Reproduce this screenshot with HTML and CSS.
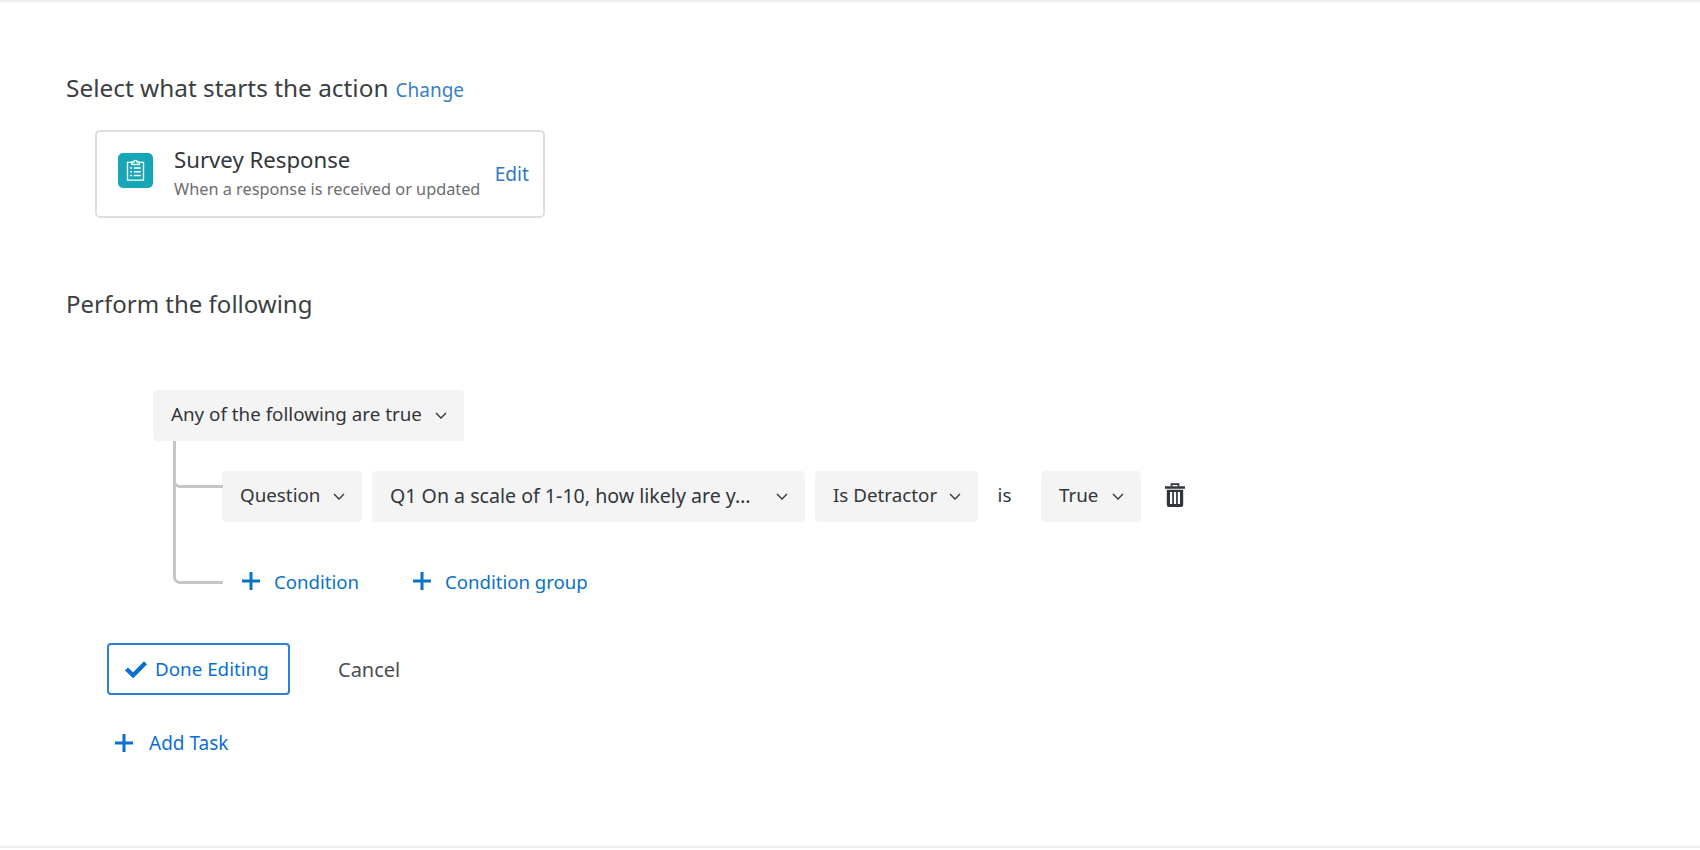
FILE: index.html
```html
<!DOCTYPE html>
<html lang="en">
<head>
<meta charset="utf-8">
<title>Survey Response action</title>
<link rel="stylesheet" href="styles.css">
</head>
<body>
<div class="page">
  <div class="heading-row first">
    <h2 class="heading">Select what starts the action</h2>
    <a class="change">Change</a>
  </div>
  <div class="card">
    <span class="card-icon">
      <svg viewBox="0 0 20 20" width="25" height="25" fill="none" stroke="#fff" stroke-width="1.1">
        <path d="M6.5 3.5H3.6v14.2h12.8V3.5h-2.9"/>
        <path d="M7 5.2V3.2h1.7a1.3 1.3 0 0 1 2.6 0H13v2z"/>
        <path d="M5.8 8h1.4M5.8 11h1.4M5.8 14h1.4M8.6 8h5.6M8.6 11h5.6M8.6 14h5.6"/>
      </svg>
    </span>
    <div class="card-text">
      <div class="card-title">Survey Response</div>
      <div class="card-sub">When a response is received or updated</div>
    </div>
    <a class="edit">Edit</a>
  </div>
  <h2 class="heading second">Perform the following</h2>

  <div class="logic">
    <div class="select any">Any of the following are true<svg class="chev" viewBox="0 0 12 7"><path d="M1 1l5 5 5-5"/></svg></div>
    <div class="tree">
      <div class="branch mid">
        <div class="select question">Question<svg class="chev" viewBox="0 0 12 7"><path d="M1 1l5 5 5-5"/></svg></div>
        <div class="select q1"><span>Q1 On a scale of 1-10, how likely are y…</span><svg class="chev" viewBox="0 0 12 7"><path d="M1 1l5 5 5-5"/></svg></div>
        <div class="select detractor">Is Detractor<svg class="chev" viewBox="0 0 12 7"><path d="M1 1l5 5 5-5"/></svg></div>
        <span class="is">is</span>
        <div class="select truth">True<svg class="chev" viewBox="0 0 12 7"><path d="M1 1l5 5 5-5"/></svg></div>
        <svg class="trash" viewBox="0 0 20 24" width="20" height="24">
          <path class="trash-lid" d="M6.5 3.5V1.2h7v2.3"/>
          <path class="trash-fill" d="M0 3.2h20v2.5H0zM1.8 6.8h16.4V22a2 2 0 0 1-2 2H3.8a2 2 0 0 1-2-2zM5 9v12h2.2V9zM8.9 9v12h2.2V9zM12.8 9v12H15V9z" fill-rule="evenodd"/>
        </svg>
      </div>
      <div class="branch last">
        <a class="add add-condition"><svg class="plus" viewBox="0 0 18 18"><path d="M9 0v18M0 9h18"/></svg>Condition</a>
        <a class="add"><svg class="plus" viewBox="0 0 18 18"><path d="M9 0v18M0 9h18"/></svg>Condition group</a>
      </div>
    </div>
  </div>

  <div class="actions">
    <a class="done">
      <svg viewBox="0 0 22 17" width="24" height="18"><path d="M2 8.5l6.3 6L20 2.5"/></svg>
      Done Editing
    </a>
    <a class="cancel">Cancel</a>
  </div>
  <a class="add add-task"><svg class="plus" viewBox="0 0 18 18"><path d="M9 0v18M0 9h18"/></svg>Add Task</a>
</div>
</body>
</html>
```

FILE: styles.css
```css
* { box-sizing: border-box; }
html, body { margin: 0; height: 100%; }
body {
  background: #fff;
  font-family: "Noto Sans", "Open Sans", sans-serif;
  color: #32363a;
  overflow: hidden;
}
.page {
  height: 848px;
  border-top: 2px solid #f1eeef;
  border-bottom: 2px solid #f0eeee;
  padding: 0 0 0 66px;
}
a { cursor: pointer; }
.heading-row { display: flex; align-items: baseline; gap: 7px; }
.first { padding-top: 70px; }
.heading {
  margin: 0;
  font-size: 24.4px;
  font-weight: 400;
  line-height: 32px;
  color: #3b3f42;
}
.second { margin-top: 70px; font-size: 24px; }
.change { font-size: 19px; color: #3a7fc1; }
.card {
  display: flex;
  align-items: center;
  width: 450px;
  height: 88px;
  margin: 26px 0 0 29px;
  padding: 0 14px 0 21px;
  border: 2px solid #dedede;
  border-radius: 5px;
}
.card-icon {
  flex: none;
  width: 35px;
  height: 35px;
  margin-bottom: 7px;
  border-radius: 5px;
  background: #17a6b6;
  display: flex;
  align-items: center;
  justify-content: center;
}
.card-text { flex: 1; margin: 0 0 3px 21px; white-space: nowrap; }
.card-title { font-size: 22.2px; line-height: 32px; margin-bottom: 1px; color: #32363a; }
.card-sub { font-size: 16.3px; line-height: 24px; color: #6a6d70; }
.edit { font-size: 19.2px; margin-bottom: 2px; color: #2f79bf; }
.logic { margin: 70px 0 0 87px; }
.select {
  display: flex;
  align-items: center;
  justify-content: space-between;
  height: 51px;
  padding: 0 17px 3px 18px;
  background: #f4f4f4;
  border-radius: 4px;
  font-size: 18.8px;
  color: #32363a;
  white-space: nowrap;
}
.any { width: 311px; }
.chev { width: 12px; height: 7px; margin-top: 3px; flex: none; fill: none; stroke: #32363a; stroke-width: 1.4; }
.tree { position: relative; padding: 30px 0 0 69px; }
.tree::before {
  content: "";
  position: absolute;
  left: 20px;
  top: 0;
  width: 3px;
  height: 128px;
  background: #c6c6c6;
}
.branch { position: relative; display: flex; align-items: center; }
.branch::before {
  content: "";
  position: absolute;
  left: -49px;
  width: 47px;
  height: 12px;
  border-left: 3px solid #c6c6c6;
  border-bottom: 3px solid #c6c6c6;
  border-bottom-left-radius: 7px;
}
.mid { height: 51px; gap: 10px; }
.mid::before { top: 2px; }
.last { margin-top: 36px; height: 46px; }
.last::before { top: 11px; }
.question { width: 140px; }
.q1 { width: 433px; font-size: 19.6px; }
.detractor { width: 163px; }
.is { width: 33px; margin-bottom: 3px; text-align: center; font-size: 18.8px; color: #32363a; }
.truth { width: 100px; margin-left: 10px; }
.trash { margin: 0 0 4px 14px; flex: none; }
.trash-fill { fill: #32363a; }
.trash-lid { fill: none; stroke: #32363a; stroke-width: 1.8; }
.add {
  display: inline-flex;
  align-items: center;
  gap: 14px;
  font-size: 18.6px;
  color: #0b72c4;
  white-space: nowrap;
}
.add-condition { margin: 0 54px 0 20px; }
.plus { width: 18px; height: 18px; fill: none; stroke: #0b72c4; stroke-width: 3; flex: none; }
.actions { display: flex; align-items: center; margin: 39px 0 0 41px; }
.done {
  display: flex;
  align-items: center;
  gap: 7px;
  width: 183px;
  height: 52px;
  padding-left: 15px;
  border: 2px solid #2a82d6;
  border-radius: 4px;
  font-size: 18.8px;
  color: #0b6fcf;
  white-space: nowrap;
}
.done svg { fill: none; stroke: #0b6fcf; stroke-width: 4; flex: none; }
.cancel { margin-left: 48px; font-size: 20px; color: #4a4d50; }
.add-task { margin: 35px 0 0 49px; gap: 16px; font-size: 19px; color: #0b6fcf; }
.add-task .plus { stroke: #0b6fcf; }
```
